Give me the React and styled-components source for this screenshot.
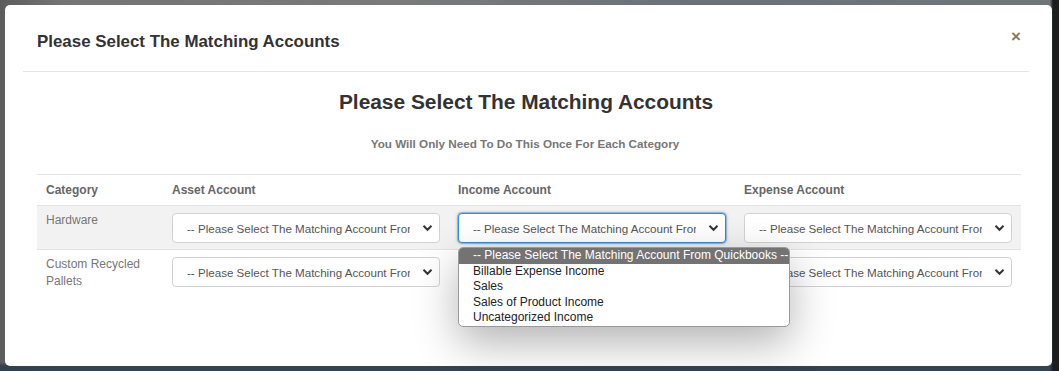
import React from 'react'
import styled, { createGlobalStyle } from 'styled-components'

const GlobalStyle = createGlobalStyle`
    html, body {
        margin: 0;
        padding: 0;
        width: 1059px;
        height: 371px;
        overflow: hidden;
    }
    body {
        font-family: 'Liberation Sans', Arial, sans-serif;
        background:
            linear-gradient(to right, rgba(0,0,0,0) 0, rgba(0,0,0,0) 1050px, #1b1d1f 1053px),
            linear-gradient(to bottom, rgba(0,0,0,0) 0, rgba(0,0,0,0) 362px, rgba(44,62,76,0.9) 366px),
            linear-gradient(to right, #5c5c5c 0, #747474 60px, #7a7a7a 400px, #6a7177 700px, #707578 1000px);
    }
`

const Backdrop = styled.div`
    padding: 5px 7px 5px 5px;
    height: 361px;
`

const Modal = styled.div`
    position: relative;
    background: #fff;
    border-radius: 5px;
    height: 361px;
    box-sizing: border-box;
`

const Header = styled.div`
    display: flex;
    align-items: center;
    justify-content: space-between;
    margin: 0 23px 0 18px;
    padding: 0 0 0 14px;
    height: 66px;
    border-bottom: 1px solid #e5e5e5;
`

const HeaderTitle = styled.h4`
    margin: 8px 0 0;
    font-size: 16.9px;
    font-weight: bold;
    color: #333;
`

const Close = styled.span`
    font-size: 17px;
    font-weight: bold;
    color: #7a7a7a;
    margin: 0 8px 4px 0;
    line-height: 1;
`

const Body = styled.div`
    padding: 0 31px 0 32px;
`

const Heading = styled.h2`
    margin: 0;
    padding-top: 18px;
    text-align: center;
    font-size: 20.9px;
    font-weight: bold;
    color: #333;
    line-height: 24px;
    padding-right: 6px;
`

const SubHeading = styled.p`
    margin: 23px 0 0;
    text-align: center;
    font-size: 11.7px;
    font-weight: bold;
    color: #777;
    line-height: 14px;
    padding-right: 8px;
`

const Table = styled.div`
    margin-top: 23px;
    border-top: 1px solid #e3e3e3;
`

const Row = styled.div`
    display: grid;
    grid-template-columns: 126px repeat(3, minmax(0, 1fr));
    background: ${p => (p.striped ? '#f2f2f2' : '#fff')};
    border-bottom: ${p => (p.last ? 'none' : '1px solid #e3e3e3')};
`

const HeadCell = styled.div`
    padding: 8px 9px 8px;
    font-size: 12px;
    font-weight: bold;
    color: #666;
    line-height: 14px;
`

const Cell = styled.div`
    position: relative;
    padding: 7px 9px 6px;
    font-size: 12px;
    color: #777;
    line-height: 17px;
`

const CategoryCell = styled(Cell)`
    padding-top: 6px;
    padding-right: 22px;
`

const SelectBox = styled.div`
    display: flex;
    align-items: center;
    height: 30px;
    box-sizing: border-box;
    border: 1px solid ${p => (p.focused ? '#2f8ae0' : '#d2d2d2')};
    border-radius: 4px;
    background: #fff;
    padding: 0 6px 0 14px;
    box-shadow: ${p => (p.focused ? '0 0 0 1px #9ab7cf, 0 0 3px 1px rgba(80,120,160,0.35)' : 'none')};
    color: #555;
    font-size: 11.6px;
`

const SelectText = styled.span`
    flex: 1;
    overflow: hidden;
    white-space: nowrap;
    margin-right: 12px;
`

const Chevron = () => (
    <svg width='11' height='8' viewBox='0 0 11 8'>
        <path d='M1.5 1.8 L5.5 5.8 L9.5 1.8' fill='none' stroke='#333' strokeWidth='2' />
    </svg>
)

const ListBox = styled.ul`
    position: absolute;
    z-index: 5;
    left: 9px;
    top: 41px;
    width: 332px;
    margin: 0;
    padding: 0;
    list-style: none;
    background: #fff;
    border: 1px solid #9a9a9a;
    border-radius: 5px;
    overflow: hidden;
    box-shadow: 0 16px 44px rgba(0, 0, 0, 0.3);
    box-sizing: border-box;
`

const Option = styled.li`
    padding: 0 4px 0 14px;
    height: 15.6px;
    line-height: 15px;
    font-size: 12px;
    white-space: nowrap;
    color: ${p => (p.selected ? '#fff' : '#222')};
    background: ${p => (p.selected ? '#737373' : 'transparent')};
`

const PLACEHOLDER = '-- Please Select The Matching Account From Quickbooks --'
const INCOME_OPTIONS = ['Billable Expense Income', 'Sales', 'Sales of Product Income', 'Uncategorized Income']

const Select = ({ focused }) => (
    <SelectBox focused={focused}>
        <SelectText>{PLACEHOLDER}</SelectText>
        <Chevron />
    </SelectBox>
)

const categories = [
    { name: 'Hardware', open: true },
    { name: 'Custom Recycled Pallets' },
]

const App = () => (
    <>
        <GlobalStyle />
        <Backdrop>
            <Modal>
                <Header>
                    <HeaderTitle>Please Select The Matching Accounts</HeaderTitle>
                    <Close>×</Close>
                </Header>
                <Body>
                    <Heading>Please Select The Matching Accounts</Heading>
                    <SubHeading>You Will Only Need To Do This Once For Each Category</SubHeading>
                    <Table>
                        <Row>
                            <HeadCell>Category</HeadCell>
                            <HeadCell>Asset Account</HeadCell>
                            <HeadCell>Income Account</HeadCell>
                            <HeadCell>Expense Account</HeadCell>
                        </Row>
                        {categories.map((c, i) => (
                            <Row key={c.name} striped={i % 2 === 0} last={i === categories.length - 1}>
                                <CategoryCell>{c.name}</CategoryCell>
                                <Cell><Select /></Cell>
                                <Cell>
                                    <Select focused={c.open} />
                                    {c.open && (
                                        <ListBox>
                                            <Option selected>{PLACEHOLDER}</Option>
                                            {INCOME_OPTIONS.map(o => <Option key={o}>{o}</Option>)}
                                        </ListBox>
                                    )}
                                </Cell>
                                <Cell><Select /></Cell>
                            </Row>
                        ))}
                    </Table>
                </Body>
            </Modal>
        </Backdrop>
    </>
)

export default App
